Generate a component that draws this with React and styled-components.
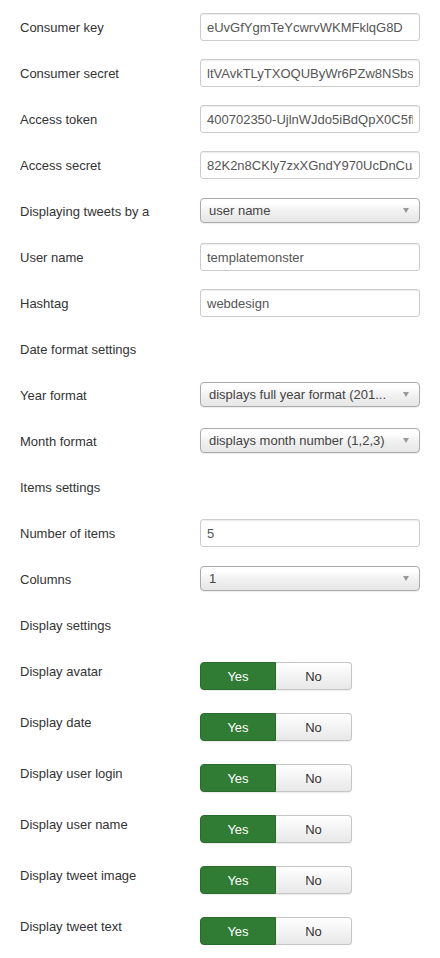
import React from "react";
import styled, { createGlobalStyle } from "styled-components";

const GlobalStyle = createGlobalStyle`
  body {
    margin: 0;
    background: #fff;
    font-family: "Liberation Sans", Arial, sans-serif;
  }
`;

const fields = [
  { label: "Consumer key", type: "input", value: "eUvGfYgmTeYcwrvWKMFklqG8D" },
  { label: "Consumer secret", type: "input", value: "ltVAvkTLyTXOQUByWr6PZw8NSbsTqLk2" },
  { label: "Access token", type: "input", value: "400702350-UjlnWJdo5iBdQpX0C5fLtW" },
  { label: "Access secret", type: "input", value: "82K2n8CKly7zxXGndY970UcDnCuJbR4" },
  { label: "Displaying tweets by a", type: "select", value: "user name" },
  { label: "User name", type: "input", value: "templatemonster" },
  { label: "Hashtag", type: "input", value: "webdesign" },
  { label: "Date format settings" },
  { label: "Year format", type: "select", value: "displays full year format (201..." },
  { label: "Month format", type: "select", value: "displays month number (1,2,3)" },
  { label: "Items settings" },
  { label: "Number of items", type: "input", value: "5" },
  { label: "Columns", type: "select", value: "1" },
  { label: "Display settings" },
  { label: "Display avatar", type: "toggle" },
  { label: "Display date", type: "toggle" },
  { label: "Display user login", type: "toggle" },
  { label: "Display user name", type: "toggle" },
  { label: "Display tweet image", type: "toggle" },
  { label: "Display tweet text", type: "toggle" },
];

const App = () => {
  return (
    <>
      <GlobalStyle />
      <Form>
        {fields.map((f) => (
          <Row key={f.label}>
            <Label>{f.label}</Label>
            {f.type === "input" && <Input readOnly defaultValue={f.value} />}
            {f.type === "select" && (
              <Select>
                <SelectText>{f.value}</SelectText>
                <Arrow />
              </Select>
            )}
            {f.type === "toggle" && (
              <Toggle>
                <ToggleButton $active>Yes</ToggleButton>
                <ToggleButton>No</ToggleButton>
              </Toggle>
            )}
          </Row>
        ))}
      </Form>
    </>
  );
};

const Form = styled.div`
  display: flex;
  flex-direction: column;
  gap: 18px;
  padding: 13px 0 0 20px;
  width: 440px;
  box-sizing: border-box;
`;

const Row = styled.div`
  display: flex;
  align-items: flex-start;
  min-height: 28px;
`;

const Label = styled.div`
  width: 180px;
  flex-shrink: 0;
  font-size: 13px;
  line-height: 30px;
  height: 28px;
  color: #333;
`;

const Input = styled.input`
  box-sizing: border-box;
  width: 220px;
  height: 28px;
  padding: 0 6px;
  border: 1px solid #ccc;
  border-radius: 3px;
  box-shadow: inset 0 1px 1px rgba(0, 0, 0, 0.075);
  font-family: "Liberation Sans", Arial, sans-serif;
  font-size: 13px;
  color: #555;
  background: #fff;
  outline: none;
`;

const Select = styled.div`
  box-sizing: border-box;
  width: 220px;
  height: 25px;
  margin-top: 1px;
  display: flex;
  align-items: center;
  justify-content: space-between;
  padding: 0 10px 0 8px;
  border: 1px solid #aaa;
  border-radius: 4px;
  background: linear-gradient(#ffffff 20%, #f2f2f2 50%, #e6e6e6 100%);
  box-shadow: 0 1px 1px rgba(0, 0, 0, 0.08);
`;

const SelectText = styled.span`
  font-size: 13px;
  color: #444;
  white-space: nowrap;
`;

const Arrow = styled.span`
  width: 0;
  height: 0;
  border-left: 3.5px solid transparent;
  border-right: 3.5px solid transparent;
  border-top: 5px solid #999;
  flex-shrink: 0;
`;

const Toggle = styled.div`
  display: flex;
  margin-top: 5px;
`;

const ToggleButton = styled.div`
  box-sizing: border-box;
  width: 76px;
  height: 28px;
  display: flex;
  align-items: center;
  justify-content: center;
  font-size: 13px;
  border: 1px solid ${(p) => (p.$active ? "#2a6b2d" : "#c5c5c5")};
  border-left-width: ${(p) => (p.$active ? "1px" : "0")};
  border-radius: ${(p) => (p.$active ? "4px 0 0 4px" : "0 4px 4px 0")};
  background: ${(p) =>
    p.$active ? "#307c35" : "linear-gradient(#ffffff, #e8e8e8)"};
  color: ${(p) => (p.$active ? "#fff" : "#333")};
  box-shadow: 0 1px 1px rgba(0, 0, 0, 0.08);
`;

export default App;
